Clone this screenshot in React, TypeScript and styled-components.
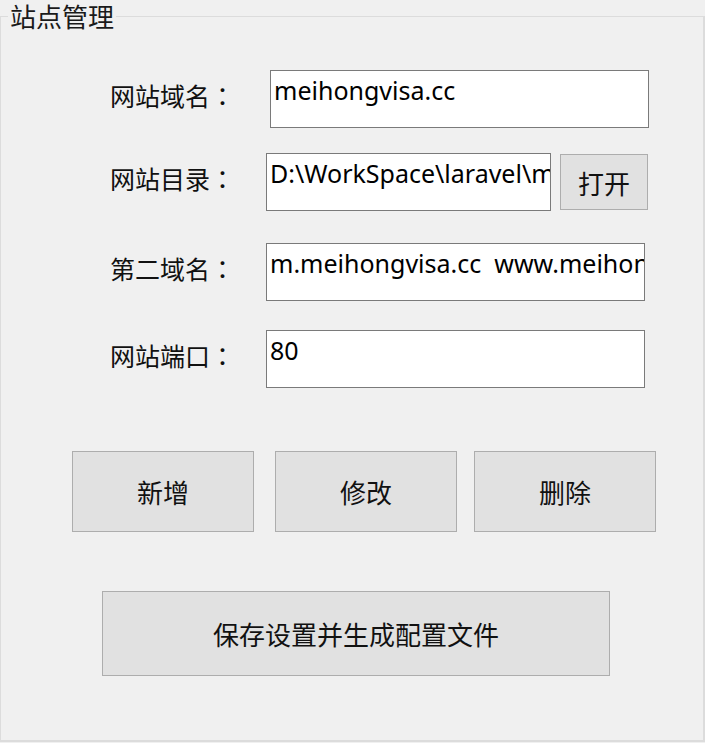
import React from "react";
import styled, { createGlobalStyle } from "styled-components";

/* Global */
/* ************************************************************************** */
const GlobalStyle = createGlobalStyle`
  html, body {
    margin: 0;
    padding: 0;
    background: #f0f0f0;
  }
  body {
    font-family: "Noto Sans CJK SC", "Noto Sans", sans-serif;
    color: #000;
  }
`;

const CJK = `"Noto Sans CJK SC", sans-serif`;
const LATIN = `"Noto Sans", "Noto Sans CJK SC", sans-serif`;

/* Styled Components */
/* ************************************************************************** */
const GroupBox = styled.fieldset`
  box-sizing: border-box;
  width: 705px;
  height: 742px;
  margin: 0;
  padding: 0;
  border: 1px solid #dcdcdc;
  border-right-width: 2px;
  border-bottom-width: 2px;
  background: #f0f0f0;
`;

const Legend = styled.legend`
  margin-left: 7px;
  padding: 0 2px;
  font-family: ${CJK};
  font-size: 26px;
  line-height: 32px;
  color: #1a1a1a;
`;

const Form = styled.div`
  display: flex;
  flex-direction: column;
`;

const Row = styled.div<{ $top: number }>`
  display: flex;
  align-items: center;
  margin-top: ${(p) => p.$top}px;
  padding-left: 109px;
`;

const Label = styled.div`
  width: 156px;
  flex: none;
  padding-bottom: 8px;
  font-family: ${CJK};
  font-size: 25px;
  line-height: 30px;
  color: #111;
  white-space: nowrap;
`;

// centred full-width colon, as in the original Song face
const Colon = styled.span`
  font-family: "Noto Sans CJK TC", sans-serif;
`;

const TextBox = styled.div<{ $width: number; $shift?: number }>`
  box-sizing: border-box;
  width: ${(p) => p.$width}px;
  height: 58px;
  margin-left: ${(p) => p.$shift ?? 0}px;
  padding: 3px 3px 0;
  background: #fff;
  border: 1px solid #7a7a7a;
  overflow: hidden;
  white-space: pre;
  font-family: ${LATIN};
  font-size: 25px;
  line-height: 32px;
  color: #000;
`;

const Button = styled.button<{ $w: number; $h: number; $left?: number }>`
  box-sizing: border-box;
  width: ${(p) => p.$w}px;
  height: ${(p) => p.$h}px;
  margin: 0 0 0 ${(p) => p.$left ?? 0}px;
  padding: 0;
  background: #e1e1e1;
  border: 1px solid #adadad;
  font-family: ${CJK};
  font-size: 26px;
  color: #111;
  cursor: default;
`;

const ButtonRow = styled.div<{ $top: number; $left: number }>`
  display: flex;
  margin-top: ${(p) => p.$top}px;
  padding-left: ${(p) => p.$left}px;
`;

/* App */
/* ************************************************************************** */
export default function App() {
  return (
    <>
      <GlobalStyle />
      <GroupBox>
        <Legend>站点管理</Legend>
        <Form>
          <Row $top={38}>
            <Label>网站域名<Colon>：</Colon></Label>
            <TextBox $width={379} $shift={4}>meihongvisa.cc</TextBox>
          </Row>
          <Row $top={25}>
            <Label>网站目录<Colon>：</Colon></Label>
            <TextBox $width={285}>D:\WorkSpace\laravel\meihongvisa</TextBox>
            <Button $w={88} $h={56} $left={9}>
              打开
            </Button>
          </Row>
          <Row $top={32}>
            <Label>第二域名<Colon>：</Colon></Label>
            <TextBox $width={379}>m.meihongvisa.cc  www.meihongvisa.cc</TextBox>
          </Row>
          <Row $top={29}>
            <Label>网站端口<Colon>：</Colon></Label>
            <TextBox $width={379}>80</TextBox>
          </Row>
          <ButtonRow $top={63} $left={71}>
            <Button $w={182} $h={81}>新增</Button>
            <Button $w={182} $h={81} $left={21}>修改</Button>
            <Button $w={182} $h={81} $left={17}>删除</Button>
          </ButtonRow>
          <ButtonRow $top={59} $left={101}>
            <Button $w={508} $h={85}>保存设置并生成配置文件</Button>
          </ButtonRow>
        </Form>
      </GroupBox>
    </>
  );
}
